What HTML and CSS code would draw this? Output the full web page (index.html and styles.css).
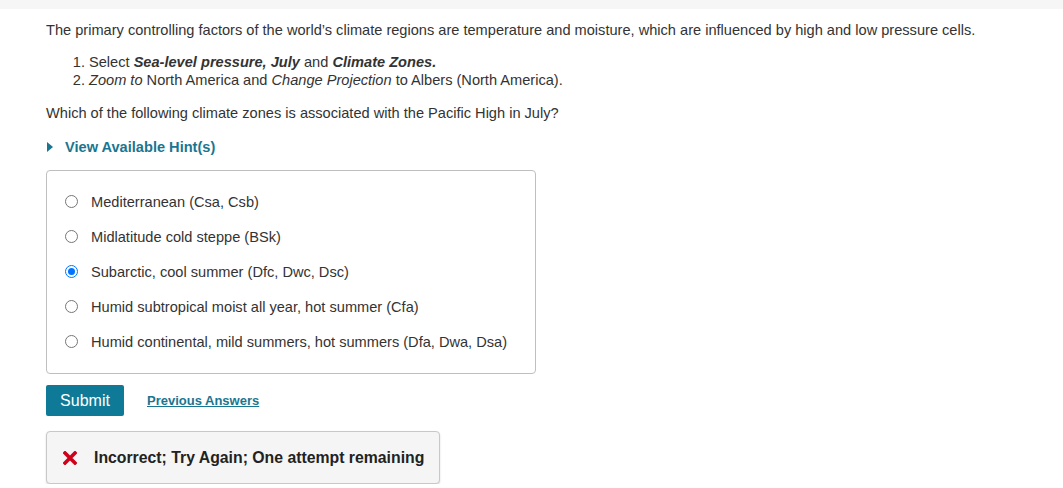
FILE: index.html
```html
<!DOCTYPE html>
<html>
<head>
<meta charset="utf-8">
<link rel="stylesheet" href="styles.css">
</head>
<body>
<div class="topbar"></div>
<main class="content">
  <p class="intro">The primary controlling factors of the world’s climate regions are temperature and moisture, which are influenced by high and low pressure cells.</p>
  <ol class="steps">
    <li>Select <b><i>Sea-level pressure, July</i></b> and <b><i>Climate Zones.</i></b></li>
    <li><i>Zoom to</i> North America and <i>Change Projection</i> to Albers (North America).</li>
  </ol>
  <p class="question">Which of the following climate zones is associated with the Pacific High in July?</p>
  <div class="hint"><span class="tri"></span>View Available Hint(s)</div>
  <div class="choices">
    <label class="choice"><span class="radio"></span>Mediterranean (Csa, Csb)</label>
    <label class="choice"><span class="radio"></span>Midlatitude cold steppe (BSk)</label>
    <label class="choice"><span class="radio checked"></span>Subarctic, cool summer (Dfc, Dwc, Dsc)</label>
    <label class="choice"><span class="radio"></span>Humid subtropical moist all year, hot summer (Cfa)</label>
    <label class="choice"><span class="radio"></span>Humid continental, mild summers, hot summers (Dfa, Dwa, Dsa)</label>
  </div>
  <div class="actions">
    <button class="submit">Submit</button>
    <a class="prev" href="#">Previous Answers</a>
  </div>
  <div class="feedback">
    <svg class="xicon" width="14" height="14" viewBox="0 0 14 14"><path d="M2 2 L12 12 M12 2 L2 12" stroke="#d0021b" stroke-width="3.6" stroke-linecap="square"/></svg>
    <span>Incorrect; Try Again; One attempt remaining</span>
  </div>
</main>
</body>
</html>
```
FILE: styles.css
```css
html, body { margin: 0; padding: 0; background: #fff; }
body { font-family: "Liberation Sans", Arial, sans-serif; color: #333; font-size: 14.6px; }
.topbar { height: 9px; background: #f6f6f6; }
.content { padding: 0 0 0 46px; }
.intro { margin: 12px 0 0; line-height: 18px; }
.steps { margin: 14px 0 0; padding-left: 43px; line-height: 18px; }
.question { margin: 15px 0 0; line-height: 18px; }
.hint { margin-top: 16px; display: flex; align-items: center; color: #1a7690; font-weight: bold; line-height: 18px; }
.tri { width: 0; height: 0; border-left: 6px solid #1a7690; border-top: 5px solid transparent; border-bottom: 5px solid transparent; margin: 0 12px 0 1px; }
.choices { margin-top: 14px; width: 490px; height: 204px; box-sizing: border-box; border: 1px solid #bfbfbf; border-radius: 4px; padding: 13px 0 12px; }
.choice { display: flex; align-items: center; height: 35px; padding-left: 18px; }
.radio { width: 11px; height: 11px; border: 1px solid #767676; border-radius: 50%; margin-right: 13px; position: relative; background: #fff; flex: none; }
.radio.checked { border-color: #0075ff; }
.radio.checked::after { content: ""; position: absolute; left: 2px; top: 2px; width: 7px; height: 7px; border-radius: 50%; background: #0075ff; }
.actions { margin-top: 11px; display: flex; align-items: center; }
.submit { font-family: "Liberation Sans", Arial, sans-serif; font-size: 16px; color: #fff; background: #0f7a98; border: none; border-radius: 2px; width: 78px; height: 31px; padding: 0; }
.prev { margin-left: 23px; color: #1a7690; font-weight: bold; font-size: 13px; text-decoration: underline; }
.feedback { margin-top: 15px; width: 394px; height: 53px; box-sizing: border-box; border: 1px solid #c8c8c8; border-radius: 4px; background: #f5f5f5; box-shadow: 0 1px 2px rgba(0,0,0,0.15); display: flex; align-items: center; padding-left: 16px; font-weight: bold; font-size: 15.8px; color: #222; }
.xicon { margin-right: 17px; flex: none; }
```
